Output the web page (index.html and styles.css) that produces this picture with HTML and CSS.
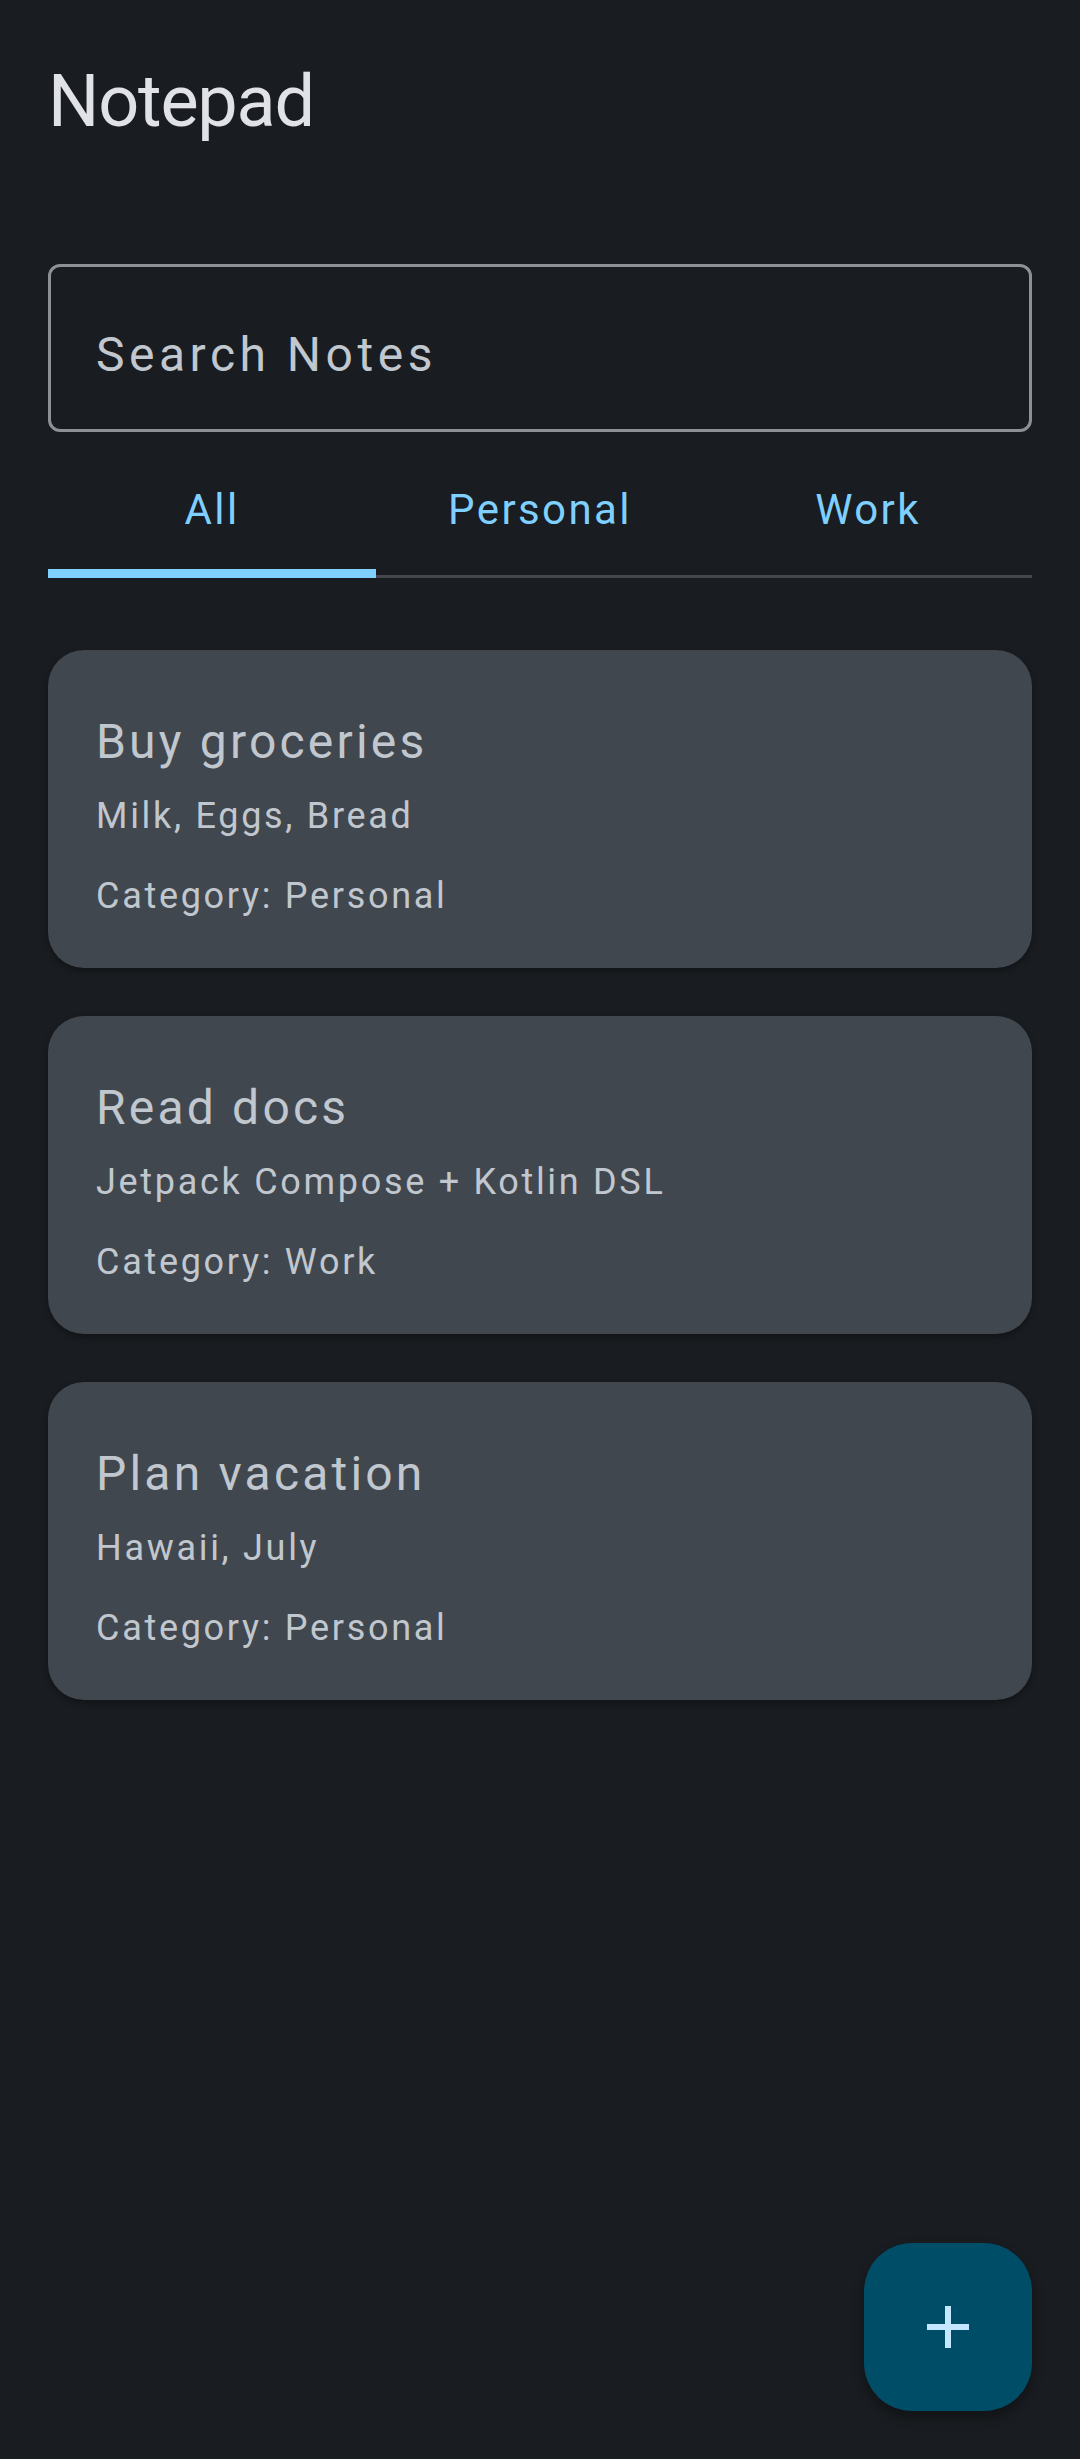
FILE: index.html
```html
<!DOCTYPE html>
<html lang="en">
<head>
<meta charset="utf-8">
<title>Notepad</title>
<link rel="stylesheet" href="styles.css">
</head>
<body>
<main class="screen">
  <h1 class="app-title">Notepad</h1>
  <div class="search-field">
    <span class="search-placeholder">Search Notes</span>
  </div>
  <nav class="tabs">
    <div class="tab tab-selected"><span class="tab-label">All</span><span class="tab-indicator"></span></div>
    <div class="tab"><span class="tab-label">Personal</span><span class="tab-indicator"></span></div>
    <div class="tab"><span class="tab-label">Work</span><span class="tab-indicator"></span></div>
  </nav>
  <section class="notes">
    <article class="note-card">
      <h2 class="note-title">Buy groceries</h2>
      <p class="note-body">Milk, Eggs, Bread</p>
      <p class="note-category">Category: Personal</p>
    </article>
    <article class="note-card">
      <h2 class="note-title">Read docs</h2>
      <p class="note-body">Jetpack Compose + Kotlin DSL</p>
      <p class="note-category">Category: Work</p>
    </article>
    <article class="note-card">
      <h2 class="note-title">Plan vacation</h2>
      <p class="note-body">Hawaii, July</p>
      <p class="note-category">Category: Personal</p>
    </article>
  </section>
</main>
<button class="fab" aria-label="Add note">
  <svg class="fab-icon" width="42" height="42" viewBox="0 0 42 42"><path d="M21 0V42M0 21H42" stroke="currentColor" stroke-width="6" fill="none"/></svg>
</button>
</body>
</html>
```
FILE: styles.css
```css
html, body {
  margin: 0;
  padding: 0;
}
body {
  width: 1080px;
  height: 2459px;
  overflow: hidden;
  position: relative;
  background: #191c20;
  font-family: Roboto, "Noto Sans", sans-serif;
}
.screen {
  padding: 54px 48px 0;
  display: flex;
  flex-direction: column;
}
.app-title {
  margin: 0;
  font-size: 72px;
  line-height: 96px;
  font-weight: 400;
  color: #e1e2e8;
  letter-spacing: -1.2px;
}
.search-field {
  margin-top: 114px;
  box-sizing: border-box;
  height: 168px;
  border: 3px solid #8c9198;
  border-radius: 12px;
  padding: 64px 45px 0;
}
.search-placeholder {
  display: block;
  font-size: 48px;
  line-height: 48px;
  color: #c1c7ce;
  letter-spacing: 4.5px;
}
.tabs {
  display: flex;
  height: 146px;
  box-shadow: inset 0 -3px 0 #44474e;
}
.tab {
  flex: 1;
  display: flex;
  flex-direction: column;
}
.tab-label {
  flex: 1;
  display: flex;
  align-items: center;
  justify-content: center;
  padding-top: 18px;
  font-size: 42px;
  line-height: 42px;
  color: #7fcfff;
  letter-spacing: 2.4px;
}
.tab-indicator {
  height: 9px;
}
.tab-selected .tab-indicator {
  background: #7fcfff;
}
.notes {
  margin-top: 72px;
  display: flex;
  flex-direction: column;
  gap: 48px;
}
.note-card {
  box-sizing: border-box;
  height: 318px;
  background: #41474e;
  border-radius: 36px;
  padding: 56px 48px 0;
  box-shadow: 0 3px 6px rgba(0, 0, 0, 0.3);
  display: flex;
  flex-direction: column;
}
.note-title {
  margin: 0;
  font-size: 48px;
  line-height: 72px;
  font-weight: 400;
  color: #c1c7ce;
  letter-spacing: 3.2px;
}
.note-body, .note-category {
  margin: 0;
  font-size: 36px;
  line-height: 48px;
  color: #c1c7ce;
  letter-spacing: 2.7px;
}
.note-body {
  margin-top: 14px;
}
.note-category {
  margin-top: 32px;
}
.fab {
  position: absolute;
  right: 48px;
  bottom: 48px;
  width: 168px;
  height: 168px;
  border: none;
  padding: 0;
  border-radius: 48px;
  background: #004d67;
  color: #c4e7ff;
  display: flex;
  align-items: center;
  justify-content: center;
  box-shadow: 0 6px 12px rgba(0, 0, 0, 0.35);
}
.fab-icon {
  display: block;
}
```
